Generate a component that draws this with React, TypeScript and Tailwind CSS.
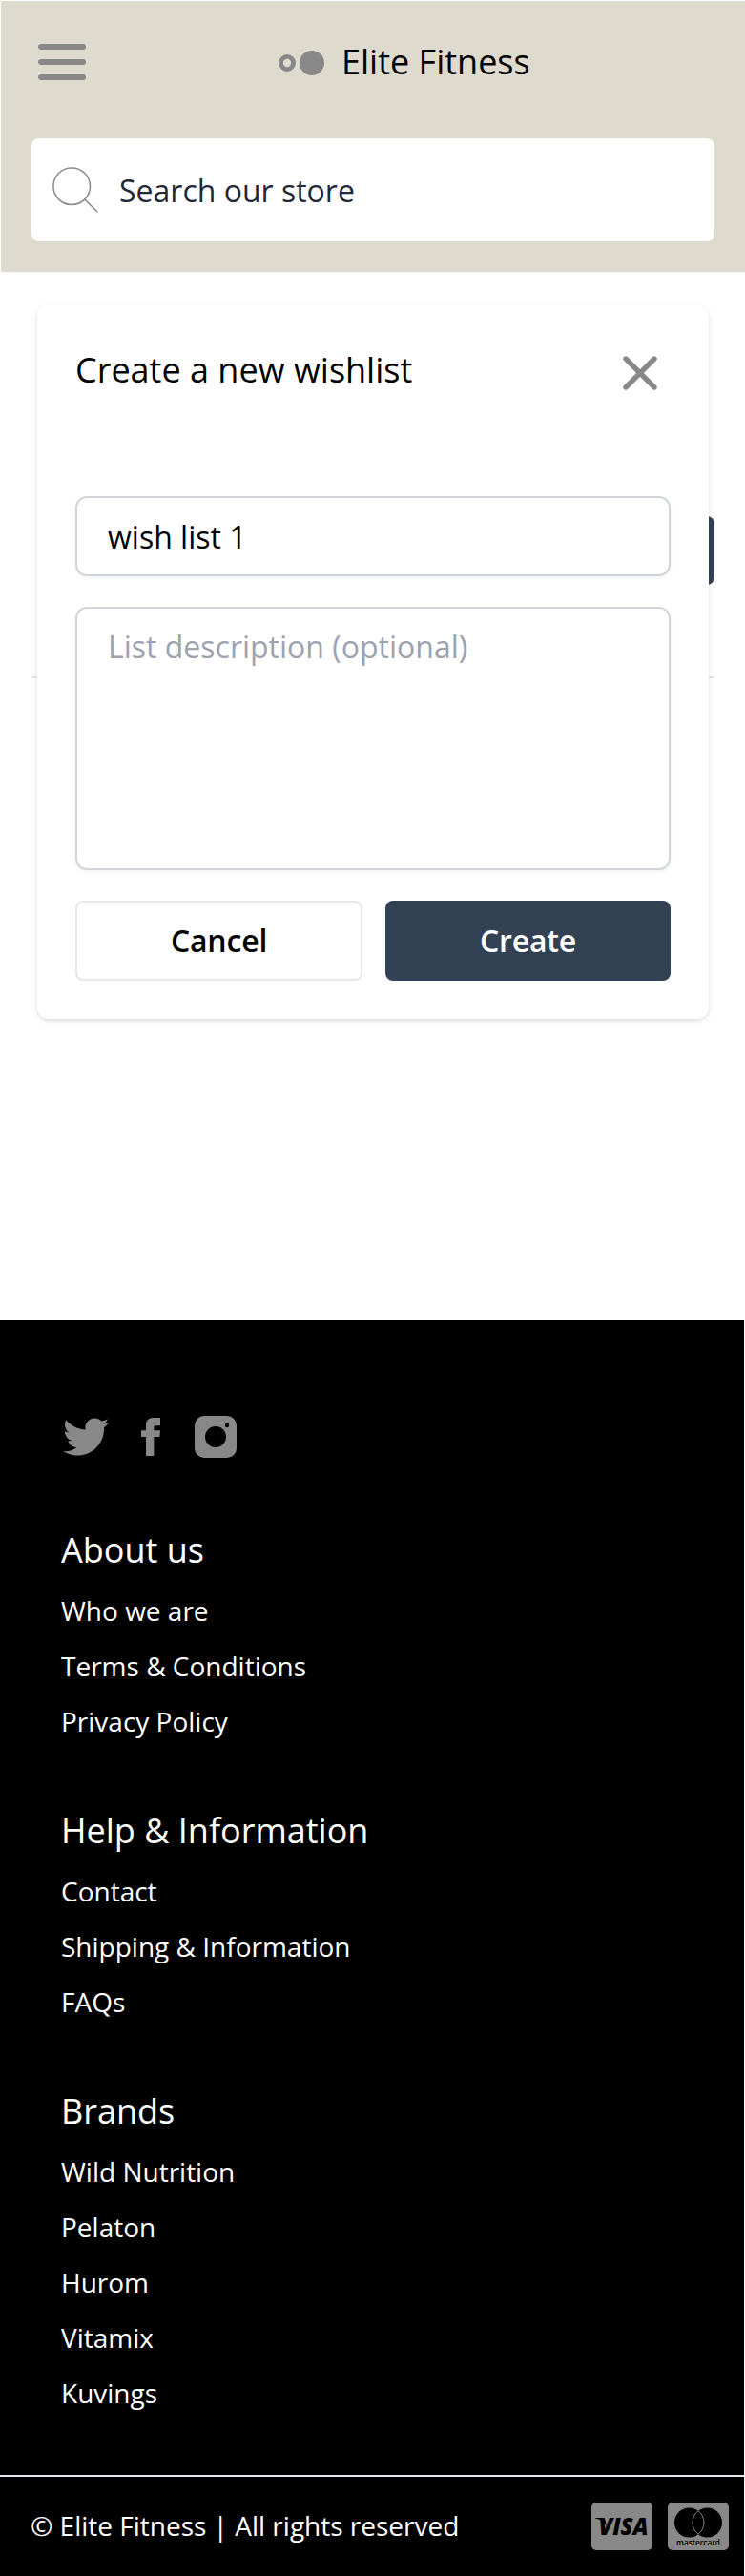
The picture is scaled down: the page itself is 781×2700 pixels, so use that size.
const groups = [
  { title: "About us", links: ["Who we are", "Terms & Conditions", "Privacy Policy"] },
  { title: "Help & Information", links: ["Contact", "Shipping & Information", "FAQs"] },
  { title: "Brands", links: ["Wild Nutrition", "Pelaton", "Hurom", "Vitamix", "Kuvings"] },
];

function Header() {
  return (
    <header className="ml-px h-[284px] bg-[#dedacd] px-8">
      <div className="flex h-36 items-start">
        <button aria-label="Menu" className="mt-[45px] ml-[7px] flex w-[50px] flex-col gap-[10px]">
          <span className="h-[6px] rounded-full bg-[#888]" />
          <span className="h-[6px] rounded-full bg-[#888]" />
          <span className="h-[6px] rounded-full bg-[#888]" />
        </button>
        <div className="mt-[37px] ml-[202px] flex items-center">
          <svg width="48" height="26" viewBox="0 0 48 26" className="mt-px mr-[18px]">
            <circle cx="9" cy="13" r="6.6" fill="none" stroke="#888" strokeWidth="4.8" />
            <circle cx="35" cy="13" r="13" fill="#888" />
          </svg>
          <span className="text-[36px] leading-[54px] whitespace-nowrap">Elite Fitness</span>
        </div>
      </div>
      <div className="flex h-[108px] items-center rounded-lg bg-white text-[#1f2937]">
        <svg
          width="48"
          height="48"
          viewBox="0 0 48 48"
          className="ml-[22px]"
          fill="none"
          stroke="#888"
          strokeWidth="1.5"
          strokeLinecap="round"
        >
          <circle cx="20.2" cy="20.2" r="19.3" />
          <path d="M33.8 34 46.8 46.8" />
        </svg>
        <span className="mt-px ml-[22px] text-[32px]">Search our store</span>
      </div>
    </header>
  );
}

function WishlistDialog() {
  return (
    <section
      role="dialog"
      aria-label="Create a new wishlist"
      className="absolute top-[35px] left-[39px] h-[748px] w-[704px] rounded-xl bg-white px-10 pt-10 shadow-[0_2px_6px_rgba(0,0,0,0.1),0_2px_4px_-2px_rgba(0,0,0,0.1)]"
    >
      <div className="flex h-40 items-start justify-between">
        <h2 className="pt-px text-[36px] leading-[54px]">Create a new wishlist</h2>
        <button aria-label="Close" className="mt-[13px] mr-[14px]">
          <svg width="36" height="36" viewBox="0 0 36 36" stroke="#888" strokeWidth="5.4" strokeLinecap="round">
            <path d="M3 3 33 33M33 3 3 33" />
          </svg>
        </button>
      </div>
      <div className="flex h-[84px] items-center rounded-xl border-2 border-[#d1d5db] px-8 pt-0.5 text-[32px] leading-[48px] shadow-[0_2px_4px_rgba(0,0,0,0.05)]">
        wish list 1
      </div>
      <div className="mt-8 h-[276px] rounded-xl border-2 border-[#d1d5db] px-8 py-4 text-[32px] leading-[48px] text-[#9ca3af] shadow-[0_2px_4px_rgba(0,0,0,0.05)]">
        List description (optional)
      </div>
      <div className="mt-8 flex h-[84px] gap-6 text-[32px] font-semibold tracking-[-0.2px]">
        <button className="w-[301px] rounded-lg border-2 border-[#e5e7eb]">Cancel</button>
        <button className="flex-1 rounded-lg bg-[#334155] text-white">Create</button>
      </div>
    </section>
  );
}

function SocialIcons() {
  return (
    <div className="flex items-center pl-0.5">
      <svg width="48" height="48" viewBox="0 0 24 24" fill="#888">
        <path d="M24 4.557c-.883.392-1.832.656-2.828.775 1.017-.609 1.798-1.574 2.165-2.724-.951.564-2.005.974-3.127 1.195-.897-.957-2.178-1.555-3.594-1.555-3.179 0-5.515 2.966-4.797 6.045-4.091-.205-7.719-2.165-10.148-5.144-1.29 2.213-.669 5.108 1.523 6.574-.806-.026-1.566-.247-2.229-.616-.054 2.281 1.581 4.415 3.949 4.89-.693.188-1.452.232-2.224.084.626 1.956 2.444 3.379 4.6 3.419-2.07 1.623-4.678 2.348-7.29 2.04 2.179 1.397 4.768 2.212 7.548 2.212 9.142 0 14.307-7.721 13.995-14.646.962-.695 1.797-1.562 2.457-2.549z" />
      </svg>
      <svg width="40" height="40" viewBox="0 0 24 24" fill="#888" className="ml-6">
        <path d="M9 8h-3v4h3v12h5v-12h3.642l.358-4h-4v-1.667c0-.955.192-1.333 1.115-1.333h2.885v-5h-3.808c-3.596 0-5.192 1.583-5.192 4.615v3.385z" />
      </svg>
      <svg width="44" height="44" viewBox="0 0 44 44" className="ml-[26px]">
        <rect width="44" height="44" rx="10" fill="#888" />
        <circle cx="22" cy="22" r="11" fill="#000" />
        <circle cx="34" cy="10" r="2.2" fill="#000" />
      </svg>
    </div>
  );
}

function PaymentCards() {
  return (
    <div className="flex gap-4">
      <svg width="64" height="50" viewBox="0 0 64 50">
        <rect width="64" height="50" rx="5" fill="#888" />
        <path d="M4 16h7.5c1.5 0 2.6.8 2.900 2.200L16 25C13.500 20 9.500 17.500 4 16.400z" fill="#000" />
        <text
          x="7.500"
          y="33.500"
          fontFamily="Open Sans"
          fontSize="25"
          fontWeight="800"
          fontStyle="italic"
          textLength="52"
          lengthAdjust="spacingAndGlyphs"
        >
          VISA
        </text>
      </svg>
      <svg width="64" height="50" viewBox="0 0 64 50">
        <rect width="64" height="50" rx="5" fill="#888" />
        <circle cx="22.500" cy="21" r="15.500" />
        <circle cx="41.500" cy="21" r="15.500" />
        <path d="M32 8.750a15.500 15.500 0 0 1 0 24.500a15.500 15.500 0 0 1 0-24.500z" stroke="#888" strokeWidth="1" />
        <text
          x="9"
          y="44.500"
          fontFamily="Open Sans"
          fontSize="8.500"
          fontWeight="600"
          textLength="46"
          lengthAdjust="spacingAndGlyphs"
        >
          mastercard
        </text>
      </svg>
    </div>
  );
}

function Footer() {
  return (
    <footer className="flex h-[1316px] w-[780px] flex-col bg-black text-white">
      <div className="h-[1210px] px-16 pt-[98px]">
        <SocialIcons />
        <div className="mt-[68px] flex flex-col gap-[59px]">
          {groups.map((g) => (
            <nav key={g.title}>
              <h3 className="mb-[7px] text-[36px] leading-[54px]">{g.title}</h3>
              <ul className="text-[28px] leading-[58px]">
                {g.links.map((l) => (
                  <li key={l}>{l}</li>
                ))}
              </ul>
            </nav>
          ))}
        </div>
      </div>
      <div className="flex h-[106px] items-center justify-between border-t-2 border-[#e5e7eb] pr-4 pl-8">
        <p className="pb-0.5 text-[28px] leading-[42px]">© Elite Fitness | All rights reserved</p>
        <PaymentCards />
      </div>
    </footer>
  );
}

export default function App() {
  return (
    <div className="h-[2700px] overflow-hidden bg-white pt-px font-['Open_Sans',sans-serif] text-black">
      <Header />
      <main className="relative h-[1099px] pr-8 pl-[33px]">
        <div className="flex h-[426px] items-start justify-end border-b-2 border-[#e5e7eb] pt-64">
          <button aria-label="New wishlist" className="h-[72px] w-60 rounded-lg bg-[#334155]" />
        </div>
        <WishlistDialog />
      </main>
      <Footer />
    </div>
  );
}
